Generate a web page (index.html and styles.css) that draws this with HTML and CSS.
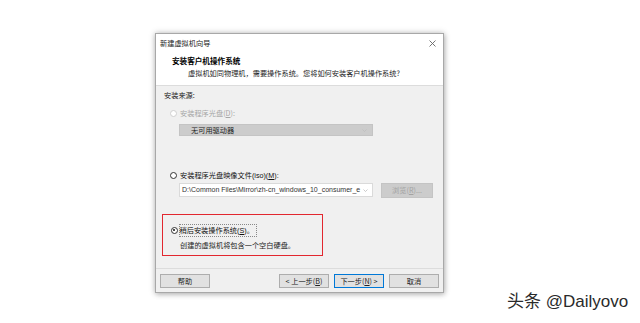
FILE: index.html
```html
<!DOCTYPE html>
<html lang="zh-CN">
<head>
<meta charset="utf-8">
<link rel="stylesheet" href="styles.css">
</head>
<body>
<div class="dialog">
  <div class="titlebar">
    <span class="title">新建虚拟机向导</span>
    <svg class="close" width="7" height="7" viewBox="0 0 7 7"><path d="M0.5 0.5L6.5 6.5M6.5 0.5L0.5 6.5" stroke="#666" stroke-width="0.9" fill="none"/></svg>
  </div>
  <div class="header">
    <div class="h-title">安装客户机操作系统</div>
    <div class="h-sub">虚拟机如同物理机，需要操作系统。您将如何安装客户机操作系统?</div>
  </div>
  <div class="body">
    <div class="label">安装来源:</div>
    <div class="row r1 disabled"><span class="radio"></span><span>安装程序光盘(<u>D</u>):</span></div>
    <div class="select">无可用驱动器<svg class="chev" width="5" height="3" viewBox="0 0 5 3"><path d="M0.5 0.5L2.5 2.5L4.5 0.5" stroke="#bbb" stroke-width="0.6" fill="none"/></svg></div>
    <div class="row r2"><span class="radio"></span><span>安装程序光盘映像文件<span class="latin">(iso)(<u>M</u>):</span></span></div>
    <div class="isorow">
      <div class="input"><span class="latin">D:\Common Files\Mirror\zh-cn_windows_10_consumer_e</span><svg class="chev" width="5" height="3" viewBox="0 0 5 3"><path d="M0.5 0.5L2.5 2.5L4.5 0.5" stroke="#aaa" stroke-width="0.6" fill="none"/></svg></div>
      <div class="browse">浏览(<u>R</u>)...</div>
    </div>
    <div class="redbox">
      <div class="row r3"><span class="radio checked"></span><span class="focus">稍后安装操作系统<span class="latin">(<u>S</u>)</span>。</span></div>
      <div class="note">创建的虚拟机将包含一个空白硬盘。</div>
    </div>
  </div>
  <div class="footer">
    <div class="btn">帮助</div>
    <div class="spacer"></div>
    <div class="btn">&lt; 上一步(<u>B</u>)</div>
    <div class="btn primary">下一步(<u>N</u>) &gt;</div>
    <div class="btn">取消</div>
  </div>
</div>
<div class="watermark">头条 @Dailyovo</div>
</body>
</html>
```
FILE: styles.css
```css
html, body {
  margin: 0;
  padding: 0;
  background: #ffffff;
}
body {
  padding: 33px 0 0 155px;
  font-family: "Noto Sans CJK SC", "Liberation Sans", sans-serif;
  font-size: 7.2px;
  color: #111;
  position: relative;
  width: 640px;
  height: 323px;
  box-sizing: border-box;
  overflow: hidden;
}
.latin {
  font-family: "Liberation Sans", "Noto Sans CJK SC", sans-serif;
}
u { text-decoration: underline; }
.dialog {
  width: 289px;
  height: 260px;
  box-sizing: border-box;
  border: 1px solid #a8a8a8;
  background: #f0f0f0;
  box-shadow: 0 0 6px rgba(0,0,0,0.25), 1px 2px 5px rgba(0,0,0,0.15);
  display: flex;
  flex-direction: column;
}
.titlebar {
  height: 17px;
  background: #fff;
  display: flex;
  align-items: center;
  padding: 0 7px 0 4px;
  justify-content: space-between;
}
.title {
  line-height: 10px;
  color: #222;
  margin-top: 1px;
}
.close { margin-top: 1px; }
.header {
  background: #fff;
  height: 35px;
  box-sizing: border-box;
  border-bottom: 1px solid #dcdcdc;
  padding: 5px 0 0 16px;
}
.h-title {
  font-weight: bold;
  font-size: 7.6px;
  line-height: 10px;
  color: #000;
}
.h-sub {
  margin-top: 2px;
  padding-left: 16px;
  line-height: 10px;
  color: #222;
}
.body {
  flex: 1;
  padding: 4px 0 0 8px;
}
.label {
  line-height: 10px;
  height: 10px;
  color: #222;
}
.row {
  display: flex;
  align-items: center;
  height: 10px;
  line-height: 10px;
  color: #111;
}
.r1 { margin-top: 8px; }
.r2 { margin-top: 34px; }
.disabled { color: #a6a6a6; }
.radio {
  width: 7px;
  height: 7px;
  box-sizing: border-box;
  border-radius: 50%;
  border: 1px solid #333;
  background: #fff;
  margin: 0 3px 0 6px;
  position: relative;
  flex: none;
}
.disabled .radio { border-color: #d0d0d0; }
.radio.checked::after {
  content: "";
  position: absolute;
  left: 1.5px;
  top: 1.5px;
  width: 2px;
  height: 2px;
  border-radius: 50%;
  background: #111;
}
.select {
  margin: 6px 0 0 15px;
  width: 194px;
  height: 12px;
  box-sizing: border-box;
  background: #cccccc;
  border: 1px solid #c4c4c4;
  padding-left: 11px;
  line-height: 10px;
  color: #222;
  display: flex;
  align-items: center;
  justify-content: space-between;
  padding-right: 5px;
}
.isorow {
  margin: 3px 0 0 15px;
  display: flex;
  gap: 8px;
  height: 15px;
}
.input {
  width: 194px;
  height: 14px;
  box-sizing: border-box;
  background: #fff;
  border: 1px solid #dadada;
  padding: 0 4px 0 2px;
  line-height: 12px;
  font-size: 7px;
  color: #333;
  display: flex;
  align-items: center;
  justify-content: space-between;
  overflow: hidden;
  white-space: nowrap;
}
.browse {
  width: 52px;
  height: 15px;
  box-sizing: border-box;
  background: #cccccc;
  border: 1px solid #c4c4c4;
  color: #a3a3a3;
  line-height: 13px;
  text-align: center;
}
.redbox {
  margin: 16px 0 0 -2px;
  width: 161px;
  height: 42px;
  box-sizing: border-box;
  border: 1.5px solid #e2272f;
  padding: 10px 0 0 0;
}
.r3 .radio { margin-left: 7.5px; margin-right: 2px; }
.focus {
  outline: 1px dotted #888;
  padding: 0 2px 0 0;
}
.note {
  margin: 5px 0 0 17px;
  line-height: 10px;
  color: #222;
}
.footer {
  height: 24px;
  box-sizing: border-box;
  border-top: 1px solid #dcdcdc;
  display: flex;
  padding: 5px 4px 0 4px;
  gap: 5px;
}
.spacer { flex: 1; }
.btn {
  width: 50px;
  height: 14px;
  box-sizing: border-box;
  background: #e1e1e1;
  border: 1px solid #adadad;
  text-align: center;
  line-height: 12px;
  color: #222;
}
.btn.primary {
  border-color: #0078d7;
}
.watermark {
  position: absolute;
  left: 507px;
  top: 291px;
  font-family: "Liberation Sans", "Noto Sans CJK SC", sans-serif;
  font-size: 17px;
  line-height: 21px;
  color: #2a2a2a;
  white-space: nowrap;
}
```
